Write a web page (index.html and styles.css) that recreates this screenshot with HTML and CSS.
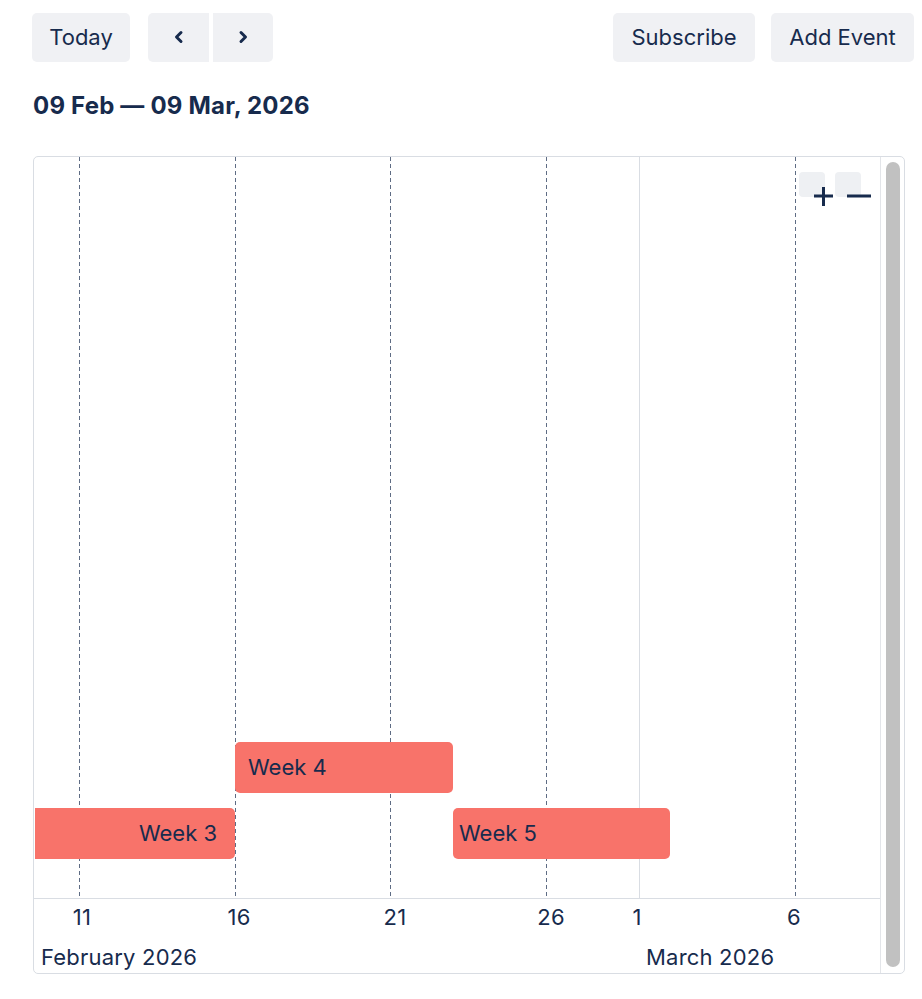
FILE: index.html
```html
<!DOCTYPE html>
<html lang="en">
<head>
<meta charset="utf-8">
<title>Timeline</title>
<link rel="stylesheet" href="styles.css">
</head>
<body>
<div class="page">
  <div class="toolbar">
    <div class="left-tools">
      <button class="btn btn-today">Today</button>
      <div class="nav-group">
        <button class="btn btn-nav btn-prev" aria-label="Previous">
          <svg width="12" height="14" viewBox="0 0 12 14"><polyline points="8,2.5 3.5,7 8,11.5" fill="none" stroke="#172b4d" stroke-width="3" stroke-linecap="round" stroke-linejoin="round"/></svg>
        </button>
        <button class="btn btn-nav btn-next" aria-label="Next">
          <svg width="12" height="14" viewBox="0 0 12 14"><polyline points="4,2.5 8.5,7 4,11.5" fill="none" stroke="#172b4d" stroke-width="3" stroke-linecap="round" stroke-linejoin="round"/></svg>
        </button>
      </div>
    </div>
    <div class="right-tools">
      <button class="btn btn-sub">Subscribe</button>
      <button class="btn btn-add">Add Event</button>
    </div>
  </div>

  <h1 class="range">09 Feb — 09 Mar, 2026</h1>

  <div class="timeline">
    <div class="canvas">
      <div class="gridline dashed" style="left:45px"></div>
      <div class="gridline dashed" style="left:201px"></div>
      <div class="gridline dashed" style="left:356px"></div>
      <div class="gridline dashed" style="left:512px"></div>
      <div class="gridline solid" style="left:605px"></div>
      <div class="gridline dashed" style="left:761px"></div>

      <div class="event ev-clipped" style="left:1px;top:651px;width:200px">Week 3</div>
      <div class="event ev-a" style="left:201px;top:585px;width:218px">Week 4</div>
      <div class="event ev-b" style="left:419px;top:651px;width:217px">Week 5</div>

      <div class="axis"></div>

      <span class="day" style="left:48px">11</span>
      <span class="day" style="left:205px">16</span>
      <span class="day" style="left:361px">21</span>
      <span class="day" style="left:517px">26</span>
      <span class="day" style="left:603px">1</span>
      <span class="day" style="left:760px">6</span>

      <span class="month" style="left:7px">February 2026</span>
      <span class="month" style="left:612px">March 2026</span>

      <div class="zoom-ctrl">
        <span class="zoom-box"></span>
        <span class="zoom-box"></span>
        <svg class="zoom-glyphs" width="80" height="40" viewBox="0 0 80 40">
          <line x1="15" y1="24" x2="34" y2="24" stroke="#172b4d" stroke-width="3"/>
          <line x1="24.5" y1="15" x2="24.5" y2="34" stroke="#172b4d" stroke-width="3"/>
          <line x1="48" y1="24" x2="72" y2="24" stroke="#172b4d" stroke-width="3"/>
        </svg>
      </div>
    </div>
    <div class="scrollbar"><div class="thumb"></div></div>
  </div>
</div>
<div class="fab"></div>
</body>
</html>
```

FILE: styles.css
```css
* { box-sizing: border-box; }
html, body { margin: 0; padding: 0; background: #fff; overflow: hidden; }
body {
  font-family: Inter, "Noto Sans", "Liberation Sans", sans-serif;
  color: #172b4d;
}
.page {
  padding: 13px 0 0 32px;
  width: 914px;
}
.toolbar {
  display: flex;
  justify-content: space-between;
  align-items: center;
  width: 882px;
}
.left-tools, .right-tools {
  display: flex;
  align-items: center;
}
.left-tools { gap: 18px; }
.right-tools { gap: 16px; }
.btn {
  height: 49px;
  border: none;
  background: #f0f1f4;
  color: #172b4d;
  font-family: inherit;
  font-size: 22px;
  border-radius: 5px;
  padding: 0 0 1px;
  display: flex;
  align-items: center;
  justify-content: center;
  cursor: pointer;
}
.btn-today { width: 98px; }
.btn-sub { width: 142px; }
.btn-add { width: 143px; }
.nav-group { display: flex; gap: 4px; }
.btn-nav { width: 61px; }
.btn-prev { border-radius: 5px 0 0 5px; }
.btn-next { width: 60px; border-radius: 0 5px 5px 0; }

.range {
  margin: 29px 0 0 1px;
  font-size: 24px;
  font-weight: 700;
  line-height: 30px;
  letter-spacing: 0.2px;
}
.timeline {
  margin: 35px 0 0 1px;
  width: 872px;
  height: 818px;
  border: 1px solid #d9dde3;
  border-radius: 5px;
  display: flex;
  overflow: hidden;
}
.canvas {
  position: relative;
  flex: 1;
  overflow: hidden;
}
.gridline {
  position: absolute;
  top: 0;
  height: 742px;
  width: 1px;
}
.gridline.dashed {
  background: repeating-linear-gradient(to bottom, #5e6c84 0, #5e6c84 4px, transparent 4px, transparent 7px);
}
.gridline.solid { background: #d9dde3; }
.axis {
  position: absolute;
  left: 0;
  right: 0;
  top: 741px;
  border-top: 1px solid #d9dde3;
}
.event {
  position: absolute;
  height: 51px;
  background: #f8736a;
  border-radius: 5px;
  font-size: 22px;
  display: flex;
  align-items: center;
  color: #172b4d;
  padding-bottom: 1px;
  white-space: nowrap;
}
.ev-clipped {
  border-radius: 0 5px 5px 0;
  justify-content: flex-end;
  padding-right: 18px;
}
.ev-a { padding-left: 13px; }
.ev-b { padding-left: 6px; }
.day, .month {
  position: absolute;
  font-size: 22px;
  line-height: 26px;
  white-space: nowrap;
  letter-spacing: 0.2px;
}
.day { top: 747px; transform: translateX(-50%); }
.month { top: 787px; }
.zoom-ctrl {
  position: absolute;
  left: 765px;
  top: 15px;
  width: 80px;
  height: 40px;
  display: flex;
  gap: 10px;
  align-items: flex-start;
}
.zoom-box {
  width: 26px;
  height: 25px;
  background: #eef0f3;
  border-radius: 4px;
}
.zoom-glyphs {
  position: absolute;
  left: 0;
  top: 0;
}
.scrollbar {
  width: 24px;
  border-left: 1px solid #e3e5e9;
  padding: 5px 4px 6px 5px;
  display: flex;
}
.thumb {
  flex: 1;
  background: #c1c1c1;
  border-radius: 7px;
}
.fab {
  position: fixed;
  left: 912px;
  top: 991px;
  width: 60px;
  height: 60px;
  border-radius: 50%;
  background: #7f66e8;
  border: 2px solid #d9d2fb;
}
```
